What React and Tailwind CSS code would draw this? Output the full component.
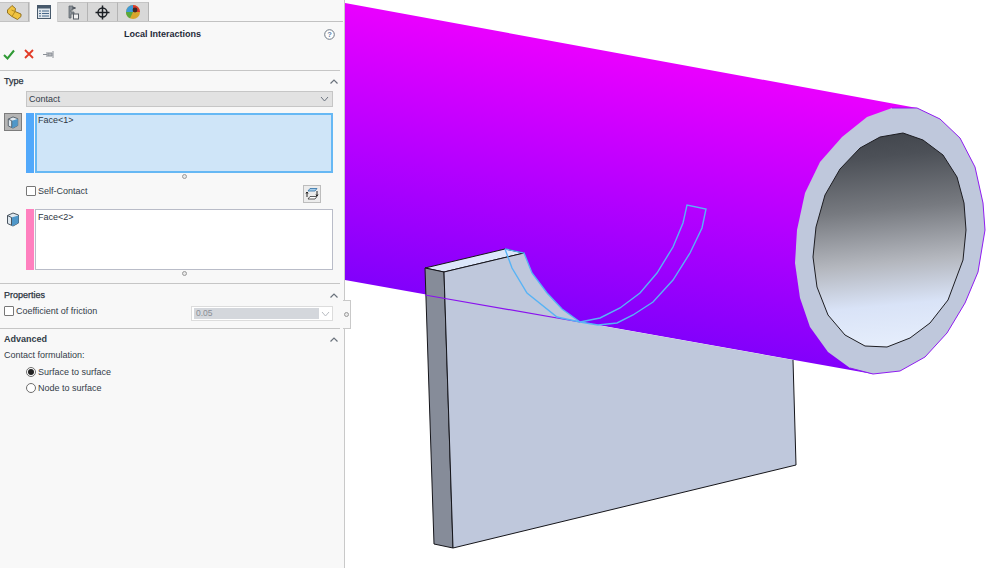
const font = { fontFamily: '"Liberation Sans", Arial, sans-serif' };

function Chevron() {
  return (
    <svg width="10" height="7" viewBox="0 0 10 7" className="shrink-0">
      <path d="M1.5 5.5 L5 2 L8.5 5.5" fill="none" stroke="#6a727c" strokeWidth="1.2" />
    </svg>
  );
}

function Down({ color = "#6b7480" }) {
  return (
    <svg width="9" height="6" viewBox="0 0 9 6">
      <path d="M1 1 L4.5 5 L8 1" fill="none" stroke={color} strokeWidth="1" />
    </svg>
  );
}

function Handle() {
  return (
    <div className="flex justify-center w-full">
      <div className="w-[5px] h-[5px] rounded-full border border-[#9a9a9a] bg-[#e8e8e8]" />
    </div>
  );
}

function Section({ title, bold }) {
  return (
    <div className="flex items-center justify-between pl-1 pr-[5px] h-[12px]">
      <span className={`text-[9px] leading-[12px] ${bold ? "font-bold text-[#333c48]" : "text-[#2a323d] [-webkit-text-stroke:0.25px_#2a323d]"}`}>{title}</span>
      <Chevron />
    </div>
  );
}

function Divider() {
  return <div className="h-[1px] w-[340px] bg-[#c6c6c6]" />;
}

function Cube({ size = 14 }) {
  return (
    <svg width={size} height={size + 1} viewBox="0 0 14 15">
      <path d="M1.5 3.5 L7 1 L12.5 3 L12.5 11 L7 14 L1.5 11.5 Z" fill="#dfe8ef" stroke="#4a5560" strokeWidth="1" />
      <path d="M5.5 5.5 L12.5 3.5 L12.5 11 L6.5 14 L5.5 13.5 Z" fill="#4f97c9" />
      <path d="M1.5 3.5 L5.5 5.5 L5.5 13" fill="none" stroke="#4a5560" strokeWidth="1" />
    </svg>
  );
}

function TabShell({ active, w, children }) {
  return (
    <div
      className={`flex items-center justify-center ${w} ${
        active
          ? "h-[20px] bg-[#f8f8f8] border-x border-[#d0d0d0] relative z-10"
          : "h-[19px] bg-[#d8d8d8] border-r border-[#b4b4b4] border-t border-t-[#c4c4c4]"
      }`}
    >
      {children}
    </div>
  );
}

function Tabs() {
  return (
    <div className="flex items-start h-[22px] pt-[2px] border-b border-[#c2c2c2] w-[343px]">
      <TabShell w="w-[29px]">
        <svg width="16" height="15" viewBox="0 0 16 15">
          <path d="M1.5 5 L6 0.5 L9.5 3.5 L9 6.5 L15 9 L15 11.5 L11.5 14.5 L6 11.5 L1.5 8 Z" fill="#f0c341" stroke="#8a6a18" strokeWidth="0.9" />
          <path d="M5.5 5 L9 6.5 L6 11.5" stroke="#b58a20" strokeWidth="1" fill="none" />
        </svg>
      </TabShell>
      <TabShell active w="w-[29px]">
        <svg width="14" height="14" viewBox="0 0 14 14">
          <rect x="0.5" y="0.5" width="13" height="13" fill="#dfe6ec" stroke="#47596b" />
          <rect x="0.5" y="0.5" width="13" height="3" fill="#47596b" />
          <path d="M2 6 H4 M5 6 H12 M2 8.5 H4 M5 8.5 H12 M2 11 H4 M5 11 H12" stroke="#47688a" strokeWidth="1.2" />
        </svg>
      </TabShell>
      <TabShell w="w-[30px]">
        <svg width="13" height="15" viewBox="0 0 13 15">
          <path d="M3 1 H7 V5 H5 V7 H8 V9 H5 V13 H3 Z" fill="#8d939a" stroke="#555b63" strokeWidth="0.7" />
          <rect x="7.5" y="9" width="5" height="5" fill="#f2f2f2" stroke="#555b63" />
          <rect x="6.5" y="2" width="3" height="2" fill="#555b63" />
        </svg>
      </TabShell>
      <TabShell w="w-[30px]">
        <svg width="15" height="15" viewBox="0 0 15 15">
          <circle cx="7.5" cy="7.5" r="4.5" fill="none" stroke="#1b1f24" strokeWidth="1.4" />
          <path d="M7.5 0.5 V14.5 M0.5 7.5 H14.5" stroke="#1b1f24" strokeWidth="1.5" />
        </svg>
      </TabShell>
      <TabShell w="w-[31px]">
        <svg width="16" height="16" viewBox="0 0 16 16">
          <circle cx="8" cy="8" r="7" fill="#d9a52c" />
          <path d="M8 8 L8 1 A7 7 0 0 1 15 8 Z" fill="#d83a2e" />
          <path d="M8 8 L1 8 A7 7 0 0 1 8 1 Z" fill="#3f9ad6" />
          <path d="M8 8 L1 8 A7 7 0 0 0 5 14.3 Z" fill="#58a83c" />
          <circle cx="10" cy="6" r="2.4" fill="#3c2a26" />
        </svg>
      </TabShell>
    </div>
  );
}

function Radio({ on, label }) {
  return (
    <div className="flex items-center h-[12px] pl-[26px]">
      <div className="w-[10px] h-[10px] rounded-full border border-[#6e6e6e] bg-white flex items-center justify-center shrink-0">
        {on && <div className="w-[6px] h-[6px] rounded-full bg-[#222]" />}
      </div>
      <span className="ml-[2px] text-[9px] leading-[12px] text-[#333c48]">{label}</span>
    </div>
  );
}

function Panel() {
  return (
    <div style={font} className="relative w-[345px] h-full shrink-0 bg-[#f8f8f8] border-r border-[#c9c9c9]">
      <Tabs />
      <div className="relative flex items-center justify-center h-[24px] mt-[1px] w-[325px]">
        <span className="text-[9px] font-bold text-[#1f2a38]">Local Interactions</span>
        <svg width="11" height="11" viewBox="0 0 11 11" className="absolute right-[-10px] top-[6px]">
          <circle cx="5.5" cy="5.5" r="4.8" fill="#fff" stroke="#6d7884" />
          <text x="5.5" y="8.2" textAnchor="middle" fontSize="7.5" fontWeight="700" fill="#5d7fa6">?</text>
        </svg>
      </div>
      <div className="flex items-center h-[14px] pl-[3px] gap-[9px]">
        <svg width="12" height="11" viewBox="0 0 12 11">
          <path d="M1 6 L4.5 9.5 L11 1.5" fill="none" stroke="#2f9a35" strokeWidth="2" />
        </svg>
        <svg width="10" height="10" viewBox="0 0 10 10">
          <path d="M1 1 L9 9 M9 1 L1 9" stroke="#e23a26" strokeWidth="1.8" />
        </svg>
        <svg width="12" height="9" viewBox="0 0 12 9">
          <path d="M0 4.5 H4 M4 2 V7 M5 3 H9 V6 H5 Z M10 1 V8" stroke="#8a8f96" strokeWidth="1" fill="#b5b8bc" />
        </svg>
      </div>
      <div className="mt-[9px]"><Divider /></div>

      <div className="mt-[4px]"><Section title="Type" /></div>
      <div className="ml-[26px] mt-[4px] w-[307px] h-[16px] bg-[#e2e2e2] border border-[#c6c6c6] flex items-center justify-between pl-[2px] pr-[3px]">
        <span className="text-[9px] text-[#333c48] pt-[1px]">Contact</span>
        <Down />
      </div>

      <div className="flex mt-[6px] h-[60px]">
        <div className="w-[26px] pl-[4px] shrink-0">
          <div className="w-[18px] h-[18px] bg-[#b5b5b5] border border-[#7d7d7d] flex items-center justify-center">
            <Cube size={12} />
          </div>
        </div>
        <div className="w-[8px] bg-[#52a9fb] shrink-0 mr-[1px]" />
        <div className="w-[298px] bg-[#cfe5f8] border-2 border-[#66b8f4] pl-[1px] text-[9px] leading-[11px] text-[#2c3541]">
          Face&lt;1&gt;
        </div>
      </div>
      <div className="pl-[26px] w-[342px] mt-[1px]"><Handle /></div>

      <div className="flex items-center h-[18px] mt-[6px] pl-[26px] w-[321px]">
        <div className="w-[10px] h-[10px] bg-white border border-[#777] rounded-[1px] shrink-0 mb-[6px]" />
        <span className="ml-[2px] text-[9px] text-[#333c48] mb-[5px]">Self-Contact</span>
        <div className="ml-auto w-[18px] h-[18px] bg-[#ececec] border border-[#bdbdbd] flex items-center justify-center">
          <svg width="14" height="14" viewBox="0 0 14 14">
            <path d="M3 4 L5 1.5 H12 L10 4 Z" fill="#a5cdec" stroke="#2f6fa5" strokeWidth="0.8" />
            <path d="M3 12 L5 9.5 H12 L10 12 Z" fill="#fff" stroke="#333" strokeWidth="0.8" />
            <path d="M2 5 V10 M12 4 V9 M2 5 L1 6.5 M2 5 L3 6.5 M12 9 L11 7.5 M12 9 L13 7.5" stroke="#111" strokeWidth="0.9" fill="none" />
          </svg>
        </div>
      </div>

      <div className="flex mt-[6px] h-[61px]">
        <div className="w-[26px] pl-[6px] pt-[3px] shrink-0"><Cube size={14} /></div>
        <div className="w-[8px] bg-[#ff80bf] shrink-0 mr-[1px]" />
        <div className="w-[298px] bg-white border border-[#b9bcc8] pl-[2px] pt-[1px] text-[9px] leading-[12px] text-[#2c3541]">
          Face&lt;2&gt;
        </div>
      </div>
      <div className="pl-[26px] w-[342px] mt-[1px]"><Handle /></div>
      <div className="mt-[7px]"><Divider /></div>

      <div className="mt-[5px]"><Section title="Properties" /></div>
      <div className="flex items-start mt-[5px] h-[18px] pl-[4px] w-[333px]">
        <div className="w-[10px] h-[10px] bg-white border border-[#777] rounded-[1px] shrink-0" />
        <span className="ml-[2px] text-[9px] leading-[10px] text-[#333c48]">Coefficient of friction</span>
        <div className="ml-auto w-[142px] h-[15px] bg-white border border-[#dcdcdc] flex items-center">
          <div className="w-[125px] h-[11px] ml-[2px] bg-[#d4d7dc] text-[8.5px] leading-[11px] pl-[2px] text-[#8a8e95]">0.05</div>
          <div className="flex-1 flex justify-center"><Down color="#b8bcc2" /></div>
        </div>
      </div>
      <div className="mt-[4px]"><Divider /></div>

      <div className="mt-[4px]"><Section title="Advanced" bold /></div>
      <div className="pl-[4px] mt-[4px] text-[9px] leading-[12px] text-[#333c48]">Contact formulation:</div>
      <div className="mt-[5px]"><Radio on label="Surface to surface" /></div>
      <div className="mt-[4px]"><Radio label="Node to surface" /></div>

      <div className="absolute left-[343px] top-[300px] w-[8px] h-[29px] bg-[#f8f8f8] border border-l-0 border-[#c9c9c9] flex items-center justify-center">
        <div className="w-[5px] h-[5px] rounded-full border border-[#9a9a9a] bg-[#e8e8e8]" />
      </div>
    </div>
  );
}

const outer = "917,108 940,119 960,138 975,167 983,203 985,230 978,272 965,303 947,333 925,357 900,371 873,374 850,368 828,352 810,327 800,298 795,263 797,230 805,193 820,162 842,137 867,117 892,108";
const inner = "903,133 923,140 943,155 957,177 964,203 966,230 963,260 948,300 930,323 910,338 887,347 865,346 845,335 828,315 817,287 813,257 816,227 825,195 840,169 860,148 880,137";

function Scene() {
  return (
    <div className="flex-1 h-full bg-white">
      <svg width="655" height="568" viewBox="345 0 655 568" className="block">
        <defs>
          <linearGradient id="tube" gradientUnits="userSpaceOnUse" x1="520" y1="40" x2="470" y2="310">
            <stop offset="0" stopColor="#e800ff" />
            <stop offset="0.5" stopColor="#b400ff" />
            <stop offset="1" stopColor="#7f00fb" />
          </linearGradient>
          <linearGradient id="bore" gradientUnits="userSpaceOnUse" x1="880" y1="135" x2="900" y2="347">
            <stop offset="0" stopColor="#43474e" />
            <stop offset="0.1" stopColor="#4c5057" />
            <stop offset="0.35" stopColor="#777a80" />
            <stop offset="0.6" stopColor="#b4b7be" />
            <stop offset="0.8" stopColor="#d9e3f7" />
            <stop offset="1" stopColor="#e6eefc" />
          </linearGradient>
        </defs>
        <polygon points="345,3 917,108 873,374 345,280" fill="url(#tube)" />
        <polygon points={outer} fill="#bfc8dc" />
        <polyline points="892,108 917,108 940,119 960,138 975,167 983,203 985,230 978,272 965,303 947,333 925,357 900,371 873,374 850,368" fill="none" stroke="#8f1cf0" strokeWidth="1" />
        <polygon points={inner} fill="url(#bore)" stroke="#1d1d22" strokeWidth="1" />
        <polygon points="425,268 505,249 524,253 444,272" fill="#dce7fa" stroke="#15151a" strokeWidth="1" />
        <polygon points="425,268 444,272 453,548 434,544" fill="#868c99" stroke="#15151a" strokeWidth="1" />
        <polygon points="444,272 524,253 532,273 547,293 562,309 580,322 793,360 796,465 453,548" fill="#bfc8dc" />
        <path d="M444 272 L524 253" stroke="#15151a" strokeWidth="1" fill="none" />
        <path d="M444 272 L453 548 L796 465 L793 360" stroke="#15151a" strokeWidth="1" fill="none" />
        <path d="M425 295 L580 322" stroke="#8a12ee" strokeWidth="1.2" fill="none" />
        <g fill="none" stroke="#58b3f5" strokeWidth="1.4">
          <path d="M505 249 L524 253 L532 273 L547 293 L562 309 L580 322" />
          <path d="M505 249 L512 268 L527 293 L557 317 L580 322" />
          <path d="M580 322 L600 318 L620 308 L640 293 L657 273 L673 247 L683 223 L687 205 L706 209 L702 228 L690 253 L673 280 L653 302 L633 315 L617 323 L598 325 L580 322" />
        </g>
      </svg>
    </div>
  );
}

export default function App() {
  return (
    <div className="flex w-[1000px] h-[568px] overflow-hidden bg-white">
      <Panel />
      <Scene />
    </div>
  );
}
